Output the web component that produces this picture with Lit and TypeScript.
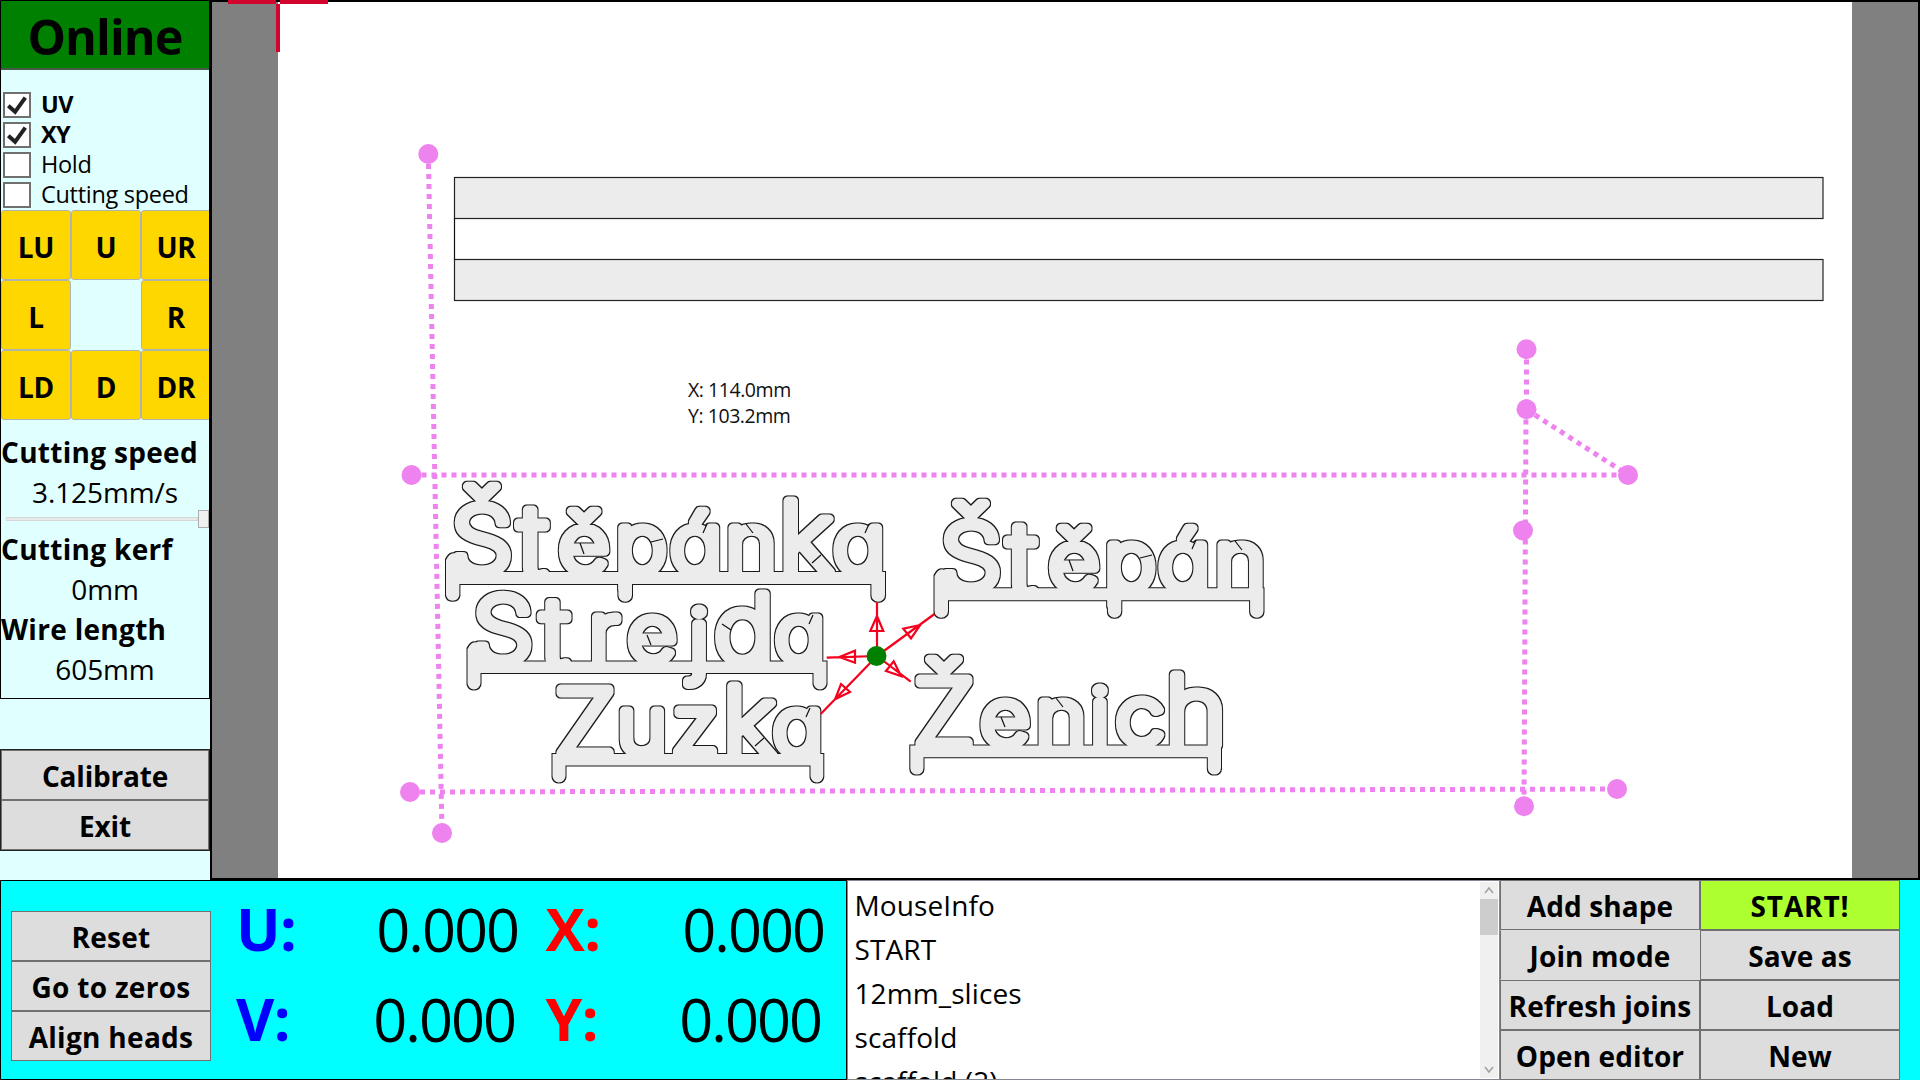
import { LitElement, html, svg, css } from "lit";
import { customElement } from "lit/decorators.js";
import { classMap } from "lit/directives/class-map.js";

type Letter = [ch: string, x: number, size?: number, dy?: number];
interface Sign {
  baseline: number;
  size: number;
  letters: Letter[];
  base: string;
  seams: string;
}

/** Horizontal stretch applied to the lettering of every sign. */
const STRETCH = 1.09;

const SIGNS: Sign[] = [
  {
    baseline: 572, size: 81,
    letters: [["Š", 482, 92, 1], ["t", 533, 100, 6], ["ě", 584], ["p", 641, 80], ["á", 696], ["n", 751, 80], ["k", 806, 98], ["a", 859]],
    base: "M446 572V560q6 -12 13 -3L464 572H885V595a6.8 6.8 0 0 1 -13.6 0V584H632V595a6.8 6.8 0 0 1 -13.6 0V584H459.4V595a6.8 6.8 0 0 1 -13.4 0Z",
    seams: "M580 543l4 11M651 542l12 -3M703 533l4 -9M746 524l7 9M812 563l9 -8M865 533l4 -9",
  },
  {
    baseline: 661, size: 78,
    letters: [["S", 503, 90, 1], ["t", 555, 96, 6], ["r", 604, 80], ["e", 652], ["j", 699, 81, 7], ["d", 744, 93, 1], ["a", 800]],
    base: "M467.5 661.5V649q6 -12 13 -3L486 661.5H826.5V683a6.5 6.5 0 0 1 -13 0V673H480.5V683a6.5 6.5 0 0 1 -13 0Z",
    seams: "M647 635l4 10M722 624l9 6M809 624l4 -9",
  },
  {
    baseline: 754, size: 78,
    letters: [["Z", 585, 92, 2], ["u", 642], ["z", 695, 81], ["k", 749, 95, 1], ["a", 798]],
    base: "M552.5 754H823.3V776a6.4 6.4 0 0 1 -12.8 0V765.5H565.5V776a6.5 6.5 0 0 1 -13 0Z",
    seams: "M755 746l9 -8M806 717l4 -9",
  },
  {
    baseline: 589, size: 81,
    letters: [["Š", 971, 92, 1], ["t", 1022, 100, 6], ["ě", 1074], ["p", 1130, 80], ["á", 1184], ["n", 1240, 80]],
    base: "M934.5 588.3V576q6 -12 13 -3L953 588.3H1263.5V611a6.7 6.7 0 0 1 -13.4 0V600.3H1121.3V611a6.7 6.7 0 0 1 -13.4 0V600.3H948V611a6.7 6.7 0 0 1 -13.5 0Z",
    seams: "M1069 560l4 11M1140 558l12 -3M1192 549l4 -9M1235 541l7 9",
  },
  {
    baseline: 745, size: 79,
    letters: [["Ž", 944, 92, 1], ["e", 1005], ["n", 1061], ["i", 1100], ["c", 1140, 82], ["h", 1196, 96]],
    base: "M910.3 745.5H1221V768a6.6 6.6 0 0 1 -13.2 0V757.3H923.5V768a6.6 6.6 0 0 1 -13.2 0Z",
    seams: "M1001 717l4 10M1056 698l7 9",
  },
];

const JOIN_LINES = [
  "M428.3 154L442 833", "M411.5 475H1628", "M410 792L1617 789",
  "M1526.5 349.5V409.5", "M1526 409.5L1524 806", "M1526.5 409.5L1628 475",
];
const JOIN_NODES = [
  [428.3, 154], [442, 833], [411.5, 475], [1628, 475], [410, 792], [1617, 789],
  [1526.5, 349.3], [1526.5, 409.3], [1523, 530.5], [1524, 806.3],
];
const ARROWS = [
  "M877 656V602M877 616L870.3 631H883.3Z",
  "M877 656L934.5 614M920.3 625L903.3 628.7L911 638.3Z",
  "M877 656L910.7 681.7M901 676L893.7 661.3L886 671Z",
  "M877 656L826.7 657.7M839.3 657L855 650.7V662.7Z",
  "M877 656L820.7 714M835 699.3L841 684L850 692Z",
];

@customElement("work-area")
export class WorkArea extends LitElement {
  static styles = css`
    :host { display: block; border: 2px solid #000; background: #808080; padding: 0 66px; }
    svg { display: block; background: #fff; overflow: visible; }
    .name { font-family: Inter, "Open Sans", sans-serif; font-weight: 200; font-feature-settings: "cv11" 1;
      fill: #ececec; stroke: #ececec; stroke-width: 9; stroke-linejoin: round; text-anchor: middle; }
    .base { fill: #ececec; }
    .thin { fill: none; stroke: #111; stroke-width: 1.2; }
    .slab { fill: #ececec; stroke: #222; stroke-width: 1.2; }
    .join { fill: none; stroke: #ee82ee; stroke-width: 5; stroke-dasharray: 5 5; }
    .node { fill: #ee82ee; }
    .arrow { fill: none; stroke: #f5001d; stroke-width: 2.2; }
    .origin { fill: none; stroke: #d2042d; stroke-width: 4; }
    .zero { fill: #008000; }
    .pos { font: 19.5px "Open Sans", sans-serif; fill: #111; letter-spacing: -0.45px; }
  `;
  render() {
    return html`<svg width="1574" height="876" viewBox="278 2 1574 876">
      <defs>
        <filter id="contour" filterUnits="userSpaceOnUse" x="400" y="440" width="900" height="380" color-interpolation-filters="sRGB">
          <feMorphology in="SourceAlpha" operator="dilate" radius="1" result="grown"></feMorphology>
          <feFlood flood-color="#1a1a1a"></feFlood>
          <feComposite in2="grown" operator="in" result="edge"></feComposite>
          <feMerge><feMergeNode in="edge"></feMergeNode><feMergeNode in="SourceGraphic"></feMergeNode></feMerge>
        </filter>
      </defs>
      <path class="origin" d="M228 2H276M280 2H328M278 4V52"></path>
      <rect class="slab" x="454.5" y="177.5" width="1368.5" height="41"></rect>
      <rect class="slab" x="454.5" y="259.5" width="1368.5" height="41"></rect>
      <path class="thin" d="M454.5 218V260"></path>
      ${JOIN_LINES.map((d) => svg`<path class="join" d=${d}></path>`)}
      ${JOIN_NODES.map(([x, y]) => svg`<circle class="node" cx=${x} cy=${y} r="10"></circle>`)}
      ${SIGNS.map((s) => svg`
        <g filter="url(#contour)">
          <path class="base" d=${s.base}></path>
          <text class="name" transform="scale(${STRETCH} 1)">${s.letters.map(([ch, x, size, dy]) =>
            svg`<tspan x=${x / STRETCH} y=${s.baseline + (dy ?? 0)} font-size=${size ?? s.size}>${ch}</tspan>`)}</text>
        </g>
        <path class="thin" d=${s.seams}></path>`)}
      ${ARROWS.map((d) => svg`<path class="arrow" d=${d}></path>`)}
      <circle class="zero" cx="876.5" cy="656" r="10"></circle>
      <text class="pos" x="688" y="397">X: 114.0mm</text>
      <text class="pos" x="688" y="423">Y: 103.2mm</text>
    </svg>`;
  }
}

@customElement("app-root")
export class AppRoot extends LitElement {
  static styles = css`
    * { box-sizing: border-box; }
    :host { display: grid; grid-template: 880px 200px / 210px 1710px; width: 1920px; height: 1080px; overflow: hidden;
      background: #e0ffff; color: #000; font: 28px/40px "Open Sans", "Noto Sans", sans-serif; }
    b, .btn, .pad { font-weight: 700; }
    .side { display: flex; flex-direction: column; }
    .top { height: 699px; border: 1px solid #000; display: flex; flex-direction: column; }
    .online { height: 69px; background: #008000; border-bottom: 2px solid #4a5a4a; text-align: center; font-weight: 700;
      font-size: 48.5px; line-height: 71px; letter-spacing: -0.9px; }
    .checks { padding: 20px 0 0 2px; height: 140px; font-size: 23.5px; line-height: 30px; letter-spacing: -0.3px; }
    .checks b { letter-spacing: -0.6px; }
    .check { display: flex; align-items: center; height: 30px; gap: 10px; white-space: nowrap; }
    .check span + span { padding-bottom: 2px; }
    .box { width: 28px; height: 26px; border: 2px solid #707070; background: #fff; flex: none; }
    .box svg { display: block; }
    .pads { display: grid; grid-template-columns: repeat(3, 70px); grid-auto-rows: 70px; overflow: hidden; height: 211px; flex: none; }
    .pad { background: #ffd700; border: 1px solid #b0b4b0; border-radius: 3px; text-align: center; line-height: 72px; letter-spacing: -0.2px; }
    .vals { padding-top: 11px; white-space: nowrap; letter-spacing: -0.1px; }
    .vals b { letter-spacing: 0.3px; }
    .line { height: 40px; }
    .mid { text-align: center; line-height: 41px; }
    .slider { height: 18px; display: flex; align-items: center; padding-left: 5px; margin: -2px 0 1px; }
    .track { width: 192px; height: 4px; background: #e7eaea; border: 1px solid #d6d6d6; }
    .thumb { width: 11px; height: 18px; background: #f0f0f0; border: 1px solid #acacac; }
    .acts { margin-top: 50px; border: 1px solid #222; }
    .acts .btn { letter-spacing: -0.2px; }
    .btn { height: 50px; background: #ddd; border: 1px solid #707070; text-align: center; font-size: 28px; line-height: 50px;
      white-space: nowrap; letter-spacing: 0.1px; }
    .bottom { grid-column: 1 / 3; display: grid; grid-template-columns: 847px 653px 200px 200px 20px; background: #00ffff; }
    .dro { border: 1px solid #000; display: grid; grid-template-columns: 200px 1fr; padding: 30px 0 0 10px; }
    .dro .btn { letter-spacing: 0.3px; }
    .axes { display: grid; grid-template-columns: 63px 219px 93px 213px; grid-auto-rows: 90px; margin: -30px 0 0 25px; align-content: start; }
    .axis { font-size: 59px; line-height: 95px; font-weight: 700; letter-spacing: -0.5px; }
    .num { font-size: 59.5px; line-height: 95px; letter-spacing: -2px; text-align: right; }
    .num.low { padding-right: 3px; }
    .blue { color: #0000ff; }
    .red { color: #ff0000; padding-left: 27.5px; }
    .list { border: 1px solid #828790; background: #fff; display: flex; justify-content: space-between; overflow: hidden; padding: 1px 0; }
    .items { padding-left: 6.5px; font-size: 28px; letter-spacing: 0.1px; }
    .item { height: 44px; line-height: 46px; white-space: nowrap; }
    .bar { width: 18px; height: 196px; background: #f0f0f0; display: flex; flex-direction: column; margin-right: 1px; }
    .bar svg { display: block; flex: none; }
    .grip { height: 36px; background: #cdcdcd; flex: none; }
    .fill { flex: 1; }
    .go { background: #adff2f; letter-spacing: 0.9px; }
    .flat { border-color: #ddd; border-left-color: #707070; }
  `;

  private check(label: unknown, on: boolean) {
    return html`<div class="check"><span class="box">${on
      ? html`<svg width="24" height="22" viewBox="0 0 24 22"><path d="M3.3 11.8l6.8 6L20.3 3.6" fill="none" stroke="#222" stroke-width="4"></path></svg>`
      : ""}</span><span>${label}</span></div>`;
  }

  private axis(label: string, value: string, red: boolean, low: boolean) {
    return html`<span class=${classMap({ axis: true, red, blue: !red })}>${label}</span>
      <span class=${classMap({ num: true, low })}>${value}</span>`;
  }

  render() {
    return html`
      <div class="side">
        <div class="top">
          <div class="online">Online</div>
          <div class="checks">
            ${this.check(html`<b>UV</b>`, true)}${this.check(html`<b>XY</b>`, true)}
            ${this.check("Hold", false)}${this.check("Cutting speed", false)}
          </div>
          <div class="pads">
            ${["LU", "U", "UR", "L", "", "R", "LD", "D", "DR"].map((t) => (t ? html`<div class="pad">${t}</div>` : html`<div></div>`))}
          </div>
          <div class="vals">
            <div class="line"><b>Cutting speed</b></div>
            <div class="line mid">3.125mm/s</div>
            <div class="slider"><div class="track"></div><div class="thumb"></div></div>
            <div class="line"><b>Cutting kerf</b></div>
            <div class="line mid">0mm</div>
            <div class="line"><b>Wire length</b></div>
            <div class="line mid">605mm</div>
          </div>
        </div>
        <div class="acts"><div class="btn">Calibrate</div><div class="btn">Exit</div></div>
      </div>
      <work-area></work-area>
      <div class="bottom">
        <div class="dro">
          <div>${["Reset", "Go to zeros", "Align heads"].map((t) => html`<div class="btn">${t}</div>`)}</div>
          <div class="axes">
            ${this.axis("U:", "0.000", false, false)}${this.axis("X:", "0.000", true, false)}
            ${this.axis("V:", "0.000", false, true)}${this.axis("Y:", "0.000", true, true)}
          </div>
        </div>
        <div class="list">
          <div class="items">
            ${["MouseInfo", "START", "12mm_slices", "scaffold", "scaffold (2)"].map((t) => html`<div class="item">${t}</div>`)}
          </div>
          <div class="bar">
            <svg width="18" height="17"><path d="M5 11l4-5 4 5" fill="none" stroke="#a0a0a0" stroke-width="1.5"></path></svg>
            <div class="grip"></div><div class="fill"></div>
            <svg width="18" height="17"><path d="M5 6l4 5 4-5" fill="none" stroke="#a0a0a0" stroke-width="1.5"></path></svg>
          </div>
        </div>
        <div>
          <div class="btn">Add shape</div><div class="btn flat">Join mode</div><div class="btn">Refresh joins</div><div class="btn">Open editor</div>
        </div>
        <div>
          <div class="btn go">START!</div><div class="btn">Save as</div><div class="btn">Load</div><div class="btn">New</div>
        </div>
      </div>`;
  }
}
